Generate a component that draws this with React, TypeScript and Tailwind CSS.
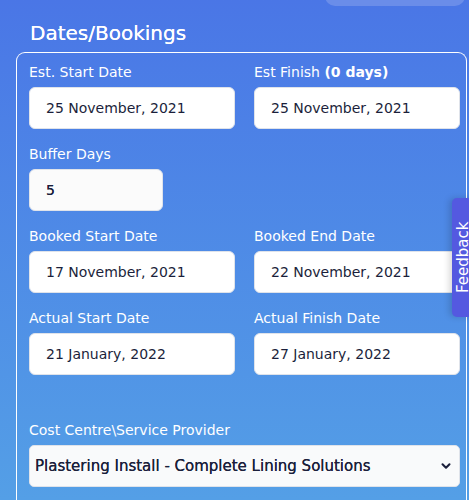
import { ChevronDown } from 'lucide-react';

const font = { fontFamily: '"DejaVu Sans", "Open Sans", sans-serif' };

function Field({ label, value }: { label: React.ReactNode; value: string }) {
  return (
    <div className="flex flex-col">
      <label className="text-[14px] leading-[20px] text-white mb-[5px]">{label}</label>
      <div className="h-[42px] rounded-[6px] bg-white border border-[#dfe3ea] flex items-center px-[16px] text-[14px] text-[#1b1f3b]">
        {value}
      </div>
    </div>
  );
}

export default function App() {
  return (
    <div
      className="relative w-[469px] h-[500px] overflow-hidden bg-gradient-to-b from-[#4a76e6] to-[#549fe6]"
      style={font}
    >
      {/* top button remnant */}
      <div className="absolute top-[-20px] left-[325px] w-[140px] h-[26px] rounded-[10px] bg-[#6a8de9]" />

      <h2 className="pt-[20px] pl-[30px] text-[20px] leading-[26px] font-medium text-white [text-shadow:0_0_0.4px_white]">
        Dates/Bookings
      </h2>

      <div className="mt-[6px] ml-[16px] mr-[2px] border border-white border-b-0 rounded-t-[9px] pt-[9px] pl-[12px] pr-[6px] h-[500px]">
        <div className="grid grid-cols-2 gap-x-[19px] gap-y-[15px]">
          <Field label="Est. Start Date" value="25 November, 2021" />
          <Field
            label={
              <>
                Est Finish <span className="font-bold">(0 days)</span>
              </>
            }
            value="25 November, 2021"
          />
          <div className="flex flex-col">
            <label className="text-[14px] leading-[20px] text-white mb-[5px]">Buffer Days</label>
            <div className="h-[42px] w-[134px] rounded-[6px] bg-[#fbfbfb] border border-[#dfe3ea] flex items-center px-[16px] text-[14px] text-[#1b1f3b] [text-shadow:0_0_0.5px_#1b1f3b]">
              5
            </div>
          </div>
          <div />
          <Field label="Booked Start Date" value="17 November, 2021" />
          <Field label="Booked End Date" value="22 November, 2021" />
          <Field label="Actual Start Date" value="21 January, 2022" />
          <Field label="Actual Finish Date" value="27 January, 2022" />
        </div>

        <div className="mt-[45px] flex flex-col">
          <label className="text-[14px] leading-[20px] text-white mb-[5px]">Cost Centre\Service Provider</label>
          <div className="h-[42px] rounded-[5px] bg-[#f9fafb] border border-[#dfe3ea] flex items-center justify-between pl-[5px] pr-[6px] text-[15px] text-[#1b1f3b] [text-shadow:0_0_0.5px_#1b1f3b]">
            <span>Plastering Install - Complete Lining Solutions</span>
            <ChevronDown size={14} strokeWidth={3.5} />
          </div>
        </div>
      </div>

      {/* Feedback tab */}
      <div className="absolute left-[452px] top-[198px] w-[24px] h-[119px] rounded-l-[5px] bg-[#5459e0] shadow-[-3px_0_6px_rgba(0,0,0,0.15)] flex items-center justify-center">
        <span className="-rotate-90 text-white text-[15px] whitespace-nowrap">Feedback</span>
      </div>
    </div>
  );
}
